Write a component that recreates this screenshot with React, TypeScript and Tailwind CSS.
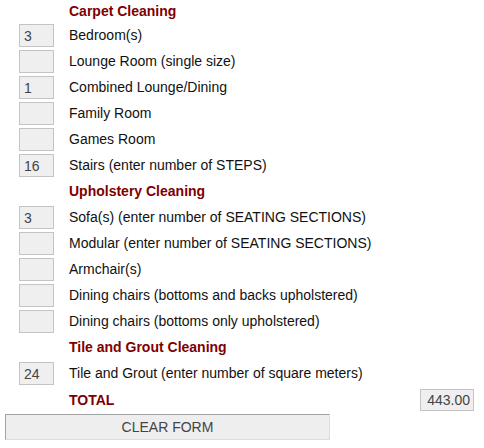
const carpet = [
  { value: "3", label: "Bedroom(s)" },
  { value: "", label: "Lounge Room (single size)" },
  { value: "1", label: "Combined Lounge/Dining" },
  { value: "", label: "Family Room" },
  { value: "", label: "Games Room" },
  { value: "16", label: "Stairs (enter number of STEPS)" },
];

const upholstery = [
  { value: "3", label: "Sofa(s) (enter number of SEATING SECTIONS)" },
  { value: "", label: "Modular (enter number of SEATING SECTIONS)" },
  { value: "", label: "Armchair(s)" },
  { value: "", label: "Dining chairs (bottoms and backs upholstered)" },
  { value: "", label: "Dining chairs (bottoms only upholstered)" },
];

const tile = [{ value: "24", label: "Tile and Grout (enter number of square meters)" }];

function Heading({ title, first }: { title: string; first?: boolean }) {
  return (
    <div className={`flex items-start ${first ? "h-[24px]" : "h-[26px]"}`}>
      <div className="w-[69px] shrink-0" />
      <div className="leading-[23px] font-bold text-[#800000]">{title}</div>
    </div>
  );
}

function Row({ value, label }: { value: string; label: string }) {
  return (
    <div className="flex items-start h-[26px]">
      <div className="w-[69px] shrink-0 pl-[19px]">
        <input
          defaultValue={value}
          className="w-[35px] h-[23px] border border-[#c4c4c4] bg-[#efefef] px-[4px] text-[14px] text-[#444] outline-none"
        />
      </div>
      <div className="leading-[23px] text-[#111]">{label}</div>
    </div>
  );
}

export default function App() {
  return (
    <div className="w-[484px] h-[448px] bg-white text-[14px]" style={{ fontFamily: '"Liberation Sans", Arial, sans-serif' }}>
      <Heading title="Carpet Cleaning" first />
      {carpet.map((r, i) => (
        <Row key={i} {...r} />
      ))}
      <Heading title="Upholstery Cleaning" />
      {upholstery.map((r, i) => (
        <Row key={i} {...r} />
      ))}
      <Heading title="Tile and Grout Cleaning" />
      {tile.map((r, i) => (
        <Row key={i} {...r} />
      ))}

      {/* Total */}
      <div className="flex items-start h-[26px] w-[474px]">
        <div className="w-[69px] shrink-0" />
        <div className="leading-[23px] font-bold text-[#800000] pt-[1px]">TOTAL</div>
        <input
          readOnly
          value="443.00"
          className="ml-auto mt-[1px] w-[54px] h-[22px] border border-[#c4c4c4] bg-[#efefef] px-[3px] text-right text-[14px] text-[#444] outline-none"
        />
      </div>

      <button className="ml-[5px] w-[325px] h-[26px] bg-[#eeeeee] border border-t-[#a3a3a3] border-l-[#a3a3a3] border-r-[#dcdcdc] border-b-[#dcdcdc] text-[14px] text-[#444]">
        CLEAR FORM
      </button>
    </div>
  );
}
